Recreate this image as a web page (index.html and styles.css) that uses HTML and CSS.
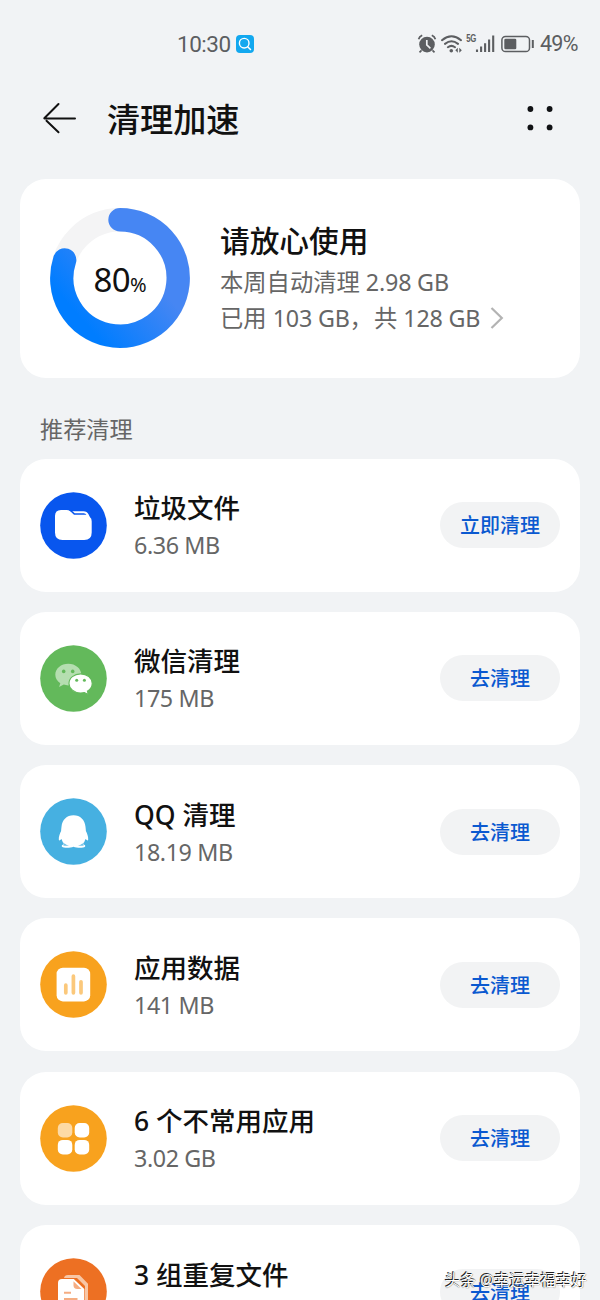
FILE: index.html
```html
<!DOCTYPE html>
<html lang="zh-CN">
<head>
<meta charset="utf-8">
<title>清理加速</title>
<link rel="stylesheet" href="styles.css">
</head>
<body>
<div class="screen">
  <div class="statusbar">
    <div class="clock"><span class="time">10:30</span>
      <svg class="search-badge" width="18" height="18" viewBox="0 0 18 18"><rect width="18" height="18" rx="4" fill="#12a8ef"/><circle cx="8.2" cy="8.2" r="4.8" fill="none" stroke="#fff" stroke-width="1.4"/><path d="M11.7 11.7l2.8 2.8" stroke="#fff" stroke-width="1.5" stroke-linecap="round"/></svg>
    </div>
    <div class="indicators">
      <svg width="118" height="22" viewBox="0 0 118 22" fill="none" stroke="#5c5e61">
        <circle cx="10" cy="11.6" r="7.8" fill="#5c5e61" stroke="none"/>
        <path d="M1.6 6.2Q2.3 3.6 5.2 2.3M14.8 2.3Q17.7 3.6 18.4 6.2M4.5 17.3l-2 2M15.5 17.3l2 2" stroke-width="1.7"/>
        <path d="M9.8 7v5l3.6 3.3" stroke="#f1f3f5" stroke-width="1.7"/>
        <path d="M25 7.2Q34.5-.7 44 7.2M28 10.9Q34.5 5.7 41 10.9M30.9 14.2Q34.5 11.5 38 14.2" stroke-width="2" stroke-linecap="round"/>
        <circle cx="34.3" cy="17.7" r="1.8" fill="#5c5e61" stroke="none"/>
        <path d="M40.8 14.8v5l-2.5-2.5zM42.3 14.8v5l2.5-2.5z" fill="#5c5e61" stroke="none"/>
        <text class="network" transform="translate(49.3 9.3) scale(.78 1)">5G</text>
        <path d="M60 16.5V19M64.1 13.5V19M68.1 10.3V19M72.1 6.5V19M76.2 2.5V19" stroke-width="2.1"/>
        <rect x="84.9" y="3.4" width="27.6" height="15.2" rx="3.6" stroke-width="1.5"/>
        <rect x="87.3" y="5.7" width="12" height="10.6" rx="1.3" fill="#5c5e61" stroke="none"/>
        <path d="M115.8 7v8" stroke-width="2"/>
      </svg>
      <span class="battery">49%</span>
    </div>
  </div>

  <header class="header">
    <svg class="back" width="36" height="32" viewBox="0 0 36 32" fill="none" stroke="#111" stroke-width="2" stroke-linecap="round" stroke-linejoin="round"><path d="M33 16.5H2.5M16.5 2L2.3 16.2M4.5 18.7L16.5 30.3"/></svg>
    <h1 class="title">清理加速</h1>
    <svg class="more" width="26" height="26" viewBox="0 0 26 26" fill="#101114"><circle cx="3.4" cy="4" r="2.9"/><circle cx="22.6" cy="4" r="2.9"/><circle cx="3.4" cy="22.4" r="2.9"/><circle cx="22.6" cy="22.4" r="2.9"/></svg>
  </header>

  <section class="card summary">
    <div class="donut">
      <svg width="140" height="140" viewBox="0 0 140 140" fill="none" stroke-width="23.4">
        <defs><linearGradient id="ring" x1=".08" y1=".75" x2=".6" y2=".3"><stop offset="0" stop-color="#007dff"/><stop offset="1" stop-color="#4686f3"/></linearGradient></defs>
        <circle cx="70" cy="70" r="58.2" stroke="#f4f4f5"/>
        <path d="M70 11.8A58.2 58.2 0 1 1 14.65 52" stroke="url(#ring)" stroke-linecap="round"/>
      </svg>
      <div class="percent">80<small>%</small></div>
    </div>
    <div class="summary-text">
      <h2>请放心使用</h2>
      <p>本周自动清理 <span class="latin">2.98 GB</span></p>
      <p class="usage">已用 <span class="latin">103 GB</span>，<span class="total">共 </span><span class="latin">128 GB</span><svg class="chevron" width="14" height="22" viewBox="0 0 14 22" fill="none" stroke="#b3b3b3" stroke-width="2.2"><path d="M1.5 1l10.3 10L1.5 21"/></svg></p>
    </div>
  </section>

  <h3 class="section-title">推荐清理</h3>

  <main class="list">
    <article class="card row">
      <svg class="icon" viewBox="0 0 67 67"><circle cx="33.5" cy="33.5" r="33.3" fill="#0856ee"/><path d="M15 24q0-6 6-6h5.5q2.2 0 3.7 1.3H43.500q3.500 0 5 3l1.500 3q1.700 1.200 1.700 4V40.500q0 7.500-7.500 7.500H22.500q-7.500 0-7.500-7.500z" fill="#fff"/><path d="M29.500 18.500l4.500 4.300H46.500q-.8-1.600-2.800-1.600H34.700l-3-2.700z" fill="#0856ee"/></svg>
      <div class="info"><h4>垃圾文件</h4><p>6.36 MB</p></div>
      <button class="action">立即清理</button>
    </article>
    <article class="card row">
      <svg class="icon" viewBox="0 0 67 67"><circle cx="33.5" cy="33.5" r="33.3" fill="#63b95b"/><path d="M28.3 18.8c-7.2 0-13 4.9-13 10.9 0 3.5 1.9 6.5 5 8.5l-1.2 3.7 4.7-2.3q2.1.8 4.5.8c7.2 0 13-4.8 13-10.7s-5.8-10.9-13-10.9z" fill="#b5deb0"/><path d="M40.6 28.9c-6.4 0-11.6 4.2-11.6 9.5s5.2 9.6 11.6 9.6q1.9 0 3.8-.5l3.9 2-.9-3.4c2.9-1.8 4.8-4.5 4.8-7.7 0-5.3-5.2-9.5-11.6-9.5z" fill="#fff" stroke="#63b95b" stroke-width="1.1"/><g fill="#63b95b"><circle cx="23.7" cy="26.4" r="1.8"/><circle cx="32.7" cy="26.4" r="1.8"/><circle cx="36.7" cy="35.2" r="1.5"/><circle cx="44.4" cy="35.2" r="1.5"/></g></svg>
      <div class="info"><h4>微信清理</h4><p>175 MB</p></div>
      <button class="action">去清理</button>
    </article>
    <article class="card row">
      <svg class="icon" viewBox="0 0 67 67"><circle cx="33.5" cy="33.5" r="33.3" fill="#46b0e1"/><path d="M33.500 17.300c-6.800 0-11.300 4.700-12 11.500q-.3 2.500-.4 4.300c-1.300 2.600-2.500 5.600-2.300 8.400.1 1.800 1.200 1 2.700-.4q.9 3 2.500 4.800c-2 .8-2.700 1.800-2 2.800 1.600 1.500 8.200 1.300 11.500.1 3.300 1.200 9.900 1.400 11.500-.1.7-1 0-2-2-2.800q1.600-1.800 2.500-4.800c1.500 1.400 2.600 2.200 2.700.4.200-2.800-1-5.800-2.300-8.400q-.1-1.800-.4-4.300c-.7-6.800-5.200-11.500-12-11.500z" fill="#fff"/><path d="M22 42.500q2.500 4.200 7 5-3.500.8-6-.2.8-1.300 1.500-1.700-1.800-1.100-2.500-3.100zM45 42.500q-2.500 4.200-7 5 3.500.8 6-.2-.8-1.300-1.500-1.700 1.800-1.100 2.500-3.100z" fill="#74c3e8"/></svg>
      <div class="info"><h4><span class="latin">QQ</span> 清理</h4><p>18.19 MB</p></div>
      <button class="action">去清理</button>
    </article>
    <article class="card row">
      <svg class="icon" viewBox="0 0 67 67"><circle cx="33.5" cy="33.5" r="33.3" fill="#f8a21e"/><rect x="16.6" y="16.8" width="33.6" height="33.6" rx="6.2" fill="#fff"/><path d="M25.8 34.2v7.6M33.4 25.2v16.6M41 30.8v11" stroke="#fbc87b" stroke-width="3.7" stroke-linecap="round"/></svg>
      <div class="info"><h4>应用数据</h4><p>141 MB</p></div>
      <button class="action">去清理</button>
    </article>
    <article class="card row">
      <svg class="icon" viewBox="0 0 67 67"><circle cx="33.5" cy="33.5" r="33.3" fill="#f8a21e"/><g fill="#fff"><rect x="17.8" y="18" width="14.5" height="14.5" rx="5" fill="#fddaa5"/><rect x="34.7" y="18" width="14.5" height="14.5" rx="5"/><rect x="17.8" y="34.9" width="14.5" height="14.5" rx="5"/><rect x="34.7" y="34.9" width="14.5" height="14.5" rx="5"/></g></svg>
      <div class="info"><h4><span class="latin">6</span> 个不常用应用</h4><p>3.02 GB</p></div>
      <button class="action">去清理</button>
    </article>
    <article class="card row">
      <svg class="icon" viewBox="0 0 67 67"><circle cx="33.5" cy="33.5" r="33.3" fill="#ed7023"/><path d="M24 20q.5-3 4-3h11.5l8.5 8.7V43q0 3-3 3V28l-8-8z" fill="#f8c6a5"/><path d="M18 25q0-4 4-4h11.8l10.5 10v16q0 4-4 4H22q-4 0-4-4z" fill="#fff"/><path d="M33.5 23.2l8 7.8h-4.2q-3.8 0-3.8-3.8z" fill="#f5ad82"/><path d="M24 34.8h7M24 41h13.500" stroke="#f5ad82" stroke-width="2"/></svg>
      <div class="info"><h4><span class="latin">3</span> 组重复文件</h4><p>&nbsp;</p></div>
      <button class="action">去清理</button>
    </article>
  </main>
  <div class="watermark">头条 @幸运幸福幸好</div>
</div>
</body>
</html>
```
FILE: styles.css
```css
* { box-sizing: border-box; margin: 0; padding: 0; }
html, body { height: 1300px; overflow: hidden; background: #f1f3f5; }
body { font-family: "Noto Sans", "Noto Sans CJK SC", sans-serif; color: #111; }
h1, h2, h3, h4 { font-weight: 500; }
svg { display: block; flex: none; }

.screen { position: relative; height: 1300px; overflow: hidden; padding: 0 20px; }

.statusbar { height: 88px; display: flex; align-items: center; justify-content: space-between; padding: 0 2px 0 157px; color: #5c5e61; }
.clock { display: flex; align-items: center; gap: 5px; }
.time { font: 400 22.5px/30px Roboto, sans-serif; letter-spacing: -.5px; }
.indicators { display: flex; align-items: center; gap: 5px; }
.network { font: 700 10px "Liberation Sans", sans-serif; fill: #5c5e61; stroke: none; letter-spacing: -.6px; }
.battery { font: 400 21.5px/30px Roboto, sans-serif; letter-spacing: -.6px; }

.header { height: 91px; display: flex; align-items: center; padding: 0 27px 31px 22px; }
.title { font-size: 33.2px; line-height: 44px; margin-left: 29px; padding-top: 3px; flex: 1; letter-spacing: -.1px; }

.card { background: #fff; border-radius: 26px; display: flex; align-items: center; }
.summary { height: 199px; padding: 0 30px 1px; }
.donut { width: 140px; height: 140px; display: grid; place-items: center; }
.donut > * { grid-area: 1 / 1; }
.percent { font-size: 33px; line-height: 40px; letter-spacing: -.6px; white-space: nowrap; padding-top: 8px; }
.percent small { font-size: 20px; letter-spacing: 0; }
.summary-text { margin-left: 30px; }
.summary-text h2 { font-size: 29.7px; line-height: 40px; padding-bottom: 3px; }
.summary-text p { font-size: 23.3px; line-height: 36px; color: #666; white-space: nowrap; }
.summary-text .latin { letter-spacing: -.2px; }
.usage { display: flex; align-items: center; }
.summary-text .usage { white-space: pre; }
.total { margin-left: 1px; }
.chevron { margin-left: 10px; }

.section-title { height: 80.5px; padding: 30px 20px 0; font-size: 23.2px; line-height: 42px; color: #666; font-weight: 400; }

.list { display: flex; flex-direction: column; gap: 20.33px; }
.row { height: 133px; flex: none; padding: 0 20px; }
.icon { width: 67px; height: 67px; }
.info { flex: 1; margin-left: 27px; padding-top: 3px; }
.info h4 { font-size: 26.5px; line-height: 38px; }
.info p { font-size: 23.3px; line-height: 37px; color: #666; letter-spacing: -.4px; }
.action { width: 120px; height: 46px; border: 0; border-radius: 23px; background: #f2f3f4; color: #0a59d0; font: 500 20px/46px "Noto Sans CJK SC", sans-serif; }

.watermark { position: absolute; right: 13px; bottom: 8px; font-size: 15.5px; line-height: 24px; color: #fff; text-shadow: 0 0 1px #222, -1px -1px 0 #222; white-space: nowrap; }
```
